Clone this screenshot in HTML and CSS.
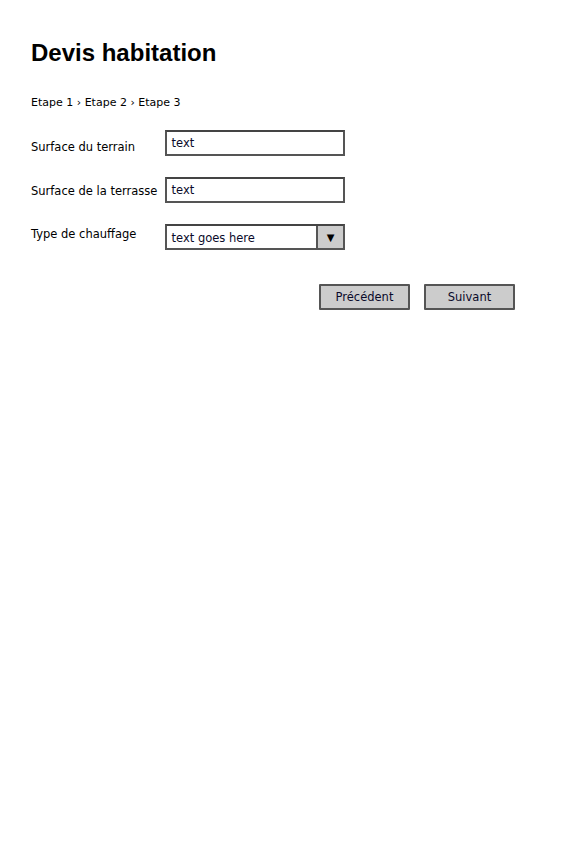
FILE: index.html
```html
<!DOCTYPE html>
<html lang="fr">
<head>
<meta charset="utf-8">
<title>Devis habitation</title>
<link rel="stylesheet" href="styles.css">
</head>
<body>
<main class="page">
  <h1 class="title">Devis habitation</h1>
  <nav class="crumbs">Etape 1 › Etape 2 › Etape 3</nav>
  <form class="form">
    <div class="row">
      <label class="label l1">Surface du terrain</label>
      <div class="field"><span class="value">text</span></div>
    </div>
    <div class="row">
      <label class="label l2">Surface de la terrasse</label>
      <div class="field"><span class="value">text</span></div>
    </div>
    <div class="row">
      <label class="label l3">Type de chauffage</label>
      <div class="field select"><span class="value sel">text goes here</span><span class="arrow">▼</span></div>
    </div>
    <div class="actions">
      <button type="button" class="btn">Précédent</button>
      <button type="button" class="btn">Suivant</button>
    </div>
  </form>
</main>
</body>
</html>
```

FILE: styles.css
```css
html, body {
  margin: 0;
  background: #fff;
}
.page {
  padding: 38px 0 0 31px;
  font-family: "Comic Sans MS", "DejaVu Sans", sans-serif;
  font-size: 11.5px;
  color: #000;
}
.title {
  font-family: "Liberation Sans", Arial, sans-serif;
  font-weight: bold;
  font-size: 24px;
  margin: 0;
  line-height: 30px;
}
.crumbs {
  margin-top: 28px;
  line-height: 14px;
  font-size: 11px;
}
.form {
  margin-top: 20px;
  width: 314px;
}
.row {
  display: flex;
  align-items: flex-start;
  margin-bottom: 21px;
}
.label {
  width: 134px;
  line-height: 14px;
}
.l1 { padding-top: 10px; }
.l2 { padding-top: 7px; }
.l3 { padding-top: 3px; }
.field {
  box-sizing: border-box;
  width: 181px;
  height: 26px;
  border: 2px solid #555;
  border-top-color: #444;
  background: #fff;
  display: flex;
  align-items: stretch;
}
.value {
  padding: 4px 0 0 5px;
  line-height: 14px;
  color: #0a0a2a;
}
.value.sel {
  padding-top: 5px;
  flex: 1;
}
.arrow {
  width: 25px;
  background: #ccc;
  border-left: 2px solid #555;
  display: flex;
  align-items: center;
  justify-content: center;
  font-size: 10px;
  color: #000;
}
.actions {
  display: flex;
  justify-content: flex-end;
  gap: 14px;
  margin-top: 34px;
  width: 484px;
}
.btn {
  box-sizing: border-box;
  width: 91px;
  height: 26px;
  background: #ccc;
  border: 2px solid #555;
  border-radius: 1px;
  font-family: "Comic Sans MS", "DejaVu Sans", sans-serif;
  font-size: 11.5px;
  color: #0a0a2a;
  padding: 0;
}
```
